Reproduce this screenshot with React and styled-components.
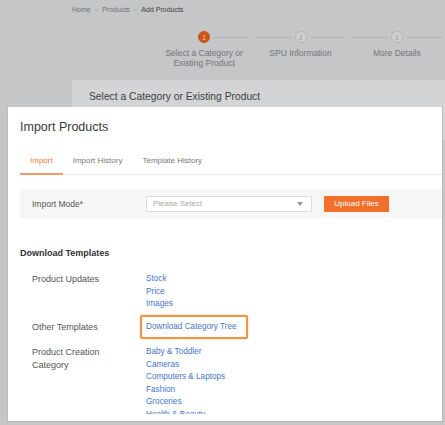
import styled, { createGlobalStyle } from "styled-components";

const GlobalStyle = createGlobalStyle`
  html, body {
    margin: 0;
    padding: 0;
    background: #c5c6c8;
    overflow: hidden;
    font-family: "Liberation Sans", Arial, sans-serif;
  }
  #root {
    height: 425px;
    position: relative;
  }
`;

const Page = styled.div`
  padding-left: 72px;
  height: 425px;
  box-sizing: border-box;
`;

const Breadcrumb = styled.div`
  display: flex;
  align-items: center;
  gap: 4px;
  padding-top: 5px;
  height: 10px;
  line-height: 10px;
  font-size: 7px;
  color: #6e6f72;
`;

const Crumb = styled.span`
  color: ${(p) => (p.$current ? "#3e3f42" : "#707174")};
`;

const Sep = styled.span`
  color: #a2a3a6;
  font-size: 6px;
`;

const Steps = styled.div`
  display: flex;
  margin-top: 16px;
  margin-left: 84px;
`;

const Step = styled.div`
  width: 103px;
  display: flex;
  flex-direction: column;
  align-items: center;
`;

const StepHead = styled.div`
  width: 100%;
  display: flex;
  align-items: center;
  height: 12px;
`;

const Line = styled.div`
  flex: 1;
  height: 1px;
  margin: 0 4px;
  background: ${(p) => (p.$hidden ? "transparent" : "#b1b2b5")};
`;

const Circle = styled.div`
  width: 12px;
  height: 12px;
  border-radius: 50%;
  box-sizing: border-box;
  display: flex;
  align-items: center;
  justify-content: center;
  font-size: 6.5px;
  background: ${(p) => (p.$active ? "#c9561c" : "#cfd0d2")};
  border: 1px solid ${(p) => (p.$active ? "#c9561c" : "#b3b4b7")};
  color: ${(p) => (p.$active ? "#f4d9c8" : "#9d9ea1")};
`;

const StepLabel = styled.div`
  margin-top: 5px;
  font-size: 8.5px;
  line-height: 10px;
  color: #737477;
  text-align: center;
`;

const Card = styled.div`
  margin-top: 12px;
  background: #d3d4d6;
  height: 60px;
  padding: 11px 0 0 17px;
  box-sizing: border-box;
  font-size: 10.3px;
  line-height: 12px;
  color: #3f4043;
`;

const Modal = styled.div`
  position: absolute;
  left: 7px;
  top: 107px;
  width: 436px;
  height: 315px;
  background: #fff;
  border: 1px solid #b9babd;
  border-top: none;
  box-sizing: border-box;
  display: flex;
  flex-direction: column;
  padding: 0 0 7px 12px;
  overflow: hidden;
`;

const Title = styled.div`
  padding-top: 12px;
  font-size: 12.5px;
  line-height: 16px;
  color: #3a3a3a;
`;

const TabBar = styled.div`
  display: flex;
  margin-top: 9px;
  border-bottom: 1px solid #ebebeb;
`;

const Tab = styled.div`
  padding: 12px 10px 7px;
  font-size: 8px;
  line-height: 10px;
  margin-bottom: -1px;
  color: ${(p) => (p.$active ? "#f07a3e" : "#7a7a7a")};
  border-bottom: 2px solid ${(p) => (p.$active ? "#f49a6a" : "transparent")};
`;

const Body = styled.div`
  flex: 1;
  min-height: 0;
  overflow: hidden;
`;

const ModeRow = styled.div`
  margin-top: 14px;
  height: 29px;
  background: #f6f6f6;
  display: flex;
  align-items: center;
  padding-left: 12px;
`;

const ModeLabel = styled.div`
  width: 114px;
  font-size: 8.5px;
  color: #555;
`;

const Select = styled.div`
  width: 166px;
  height: 16px;
  box-sizing: border-box;
  background: #fff;
  border: 1px solid #dadada;
  display: flex;
  align-items: center;
  justify-content: space-between;
  padding: 0 8px 0 6px;
  font-size: 8px;
  color: #aaa;
`;

const Caret = styled.span`
  width: 0;
  height: 0;
  border-left: 3px solid transparent;
  border-right: 3px solid transparent;
  border-top: 4px solid #999;
`;

const UploadButton = styled.div`
  margin-left: 12px;
  width: 65px;
  height: 16px;
  background: #f2702c;
  color: #fff;
  font-size: 8px;
  display: flex;
  align-items: center;
  justify-content: center;
`;

const SectionTitle = styled.div`
  margin-top: 29px;
  font-size: 9px;
  line-height: 12px;
  font-weight: bold;
  color: #333;
`;

const TemplateRow = styled.div`
  display: flex;
  align-items: ${(p) => (p.$center ? "center" : "flex-start")};
  margin-top: ${(p) => p.$mt}px;
  padding-left: 12px;
`;

const RowLabel = styled.div`
  width: 114px;
  flex-shrink: 0;
  font-size: 9px;
  line-height: 12.5px;
  color: #555;
`;

const Links = styled.div`
  display: flex;
  flex-direction: column;
`;

const LinkItem = styled.a`
  display: block;
  font-size: 8.2px;
  line-height: 12.5px;
  color: #4675c6;
  text-decoration: none;
`;

const Highlight = styled.div`
  margin-left: -6px;
  border: 2px solid #f3923f;
  border-radius: 2px;
  padding: 4px 9px 4px 4px;
  box-shadow: 0 0 2px rgba(243, 146, 63, 0.5);
`;

const steps = [
  { n: 1, label: ["Select a Category or", "Existing Product"], active: true },
  { n: 2, label: ["SPU Information"] },
  { n: 3, label: ["More Details"] },
];

const categories = [
  "Baby & Toddler",
  "Cameras",
  "Computers & Laptops",
  "Fashion",
  "Groceries",
  "Health & Beauty",
  "Home & Living",
];

export default function App() {
  return (
    <>
      <GlobalStyle />
      <Page>
        <Breadcrumb>
          <Crumb>Home</Crumb>
          <Sep>&gt;</Sep>
          <Crumb>Products</Crumb>
          <Sep>&gt;</Sep>
          <Crumb $current>Add Products</Crumb>
        </Breadcrumb>
        <Steps>
          {steps.map((s, i) => (
            <Step key={s.n}>
              <StepHead>
                <Line $hidden={i === 0} />
                <Circle $active={s.active}>{s.n}</Circle>
                <Line />
              </StepHead>
              <StepLabel>
                {s.label.map((l) => (
                  <div key={l}>{l}</div>
                ))}
              </StepLabel>
            </Step>
          ))}
        </Steps>
        <Card>Select a Category or Existing Product</Card>
      </Page>

      <Modal>
        <Title>Import Products</Title>
        <TabBar>
          <Tab $active>Import</Tab>
          <Tab>Import History</Tab>
          <Tab>Template History</Tab>
        </TabBar>
        <Body>
          <ModeRow>
            <ModeLabel>Import Mode*</ModeLabel>
            <Select>
              <span>Please Select</span>
              <Caret />
            </Select>
            <UploadButton>Upload Files</UploadButton>
          </ModeRow>

          <SectionTitle>Download Templates</SectionTitle>

          <TemplateRow $mt={14}>
            <RowLabel>Product Updates</RowLabel>
            <Links>
              <LinkItem href="#">Stock</LinkItem>
              <LinkItem href="#">Price</LinkItem>
              <LinkItem href="#">Images</LinkItem>
            </Links>
          </TemplateRow>

          <TemplateRow $mt={4} $center>
            <RowLabel>Other Templates</RowLabel>
            <Highlight>
              <LinkItem href="#">Download Category Tree</LinkItem>
            </Highlight>
          </TemplateRow>

          <TemplateRow $mt={7}>
            <RowLabel>
              Product Creation
              <br />
              Category
            </RowLabel>
            <Links>
              {categories.map((c) => (
                <LinkItem href="#" key={c}>
                  {c}
                </LinkItem>
              ))}
            </Links>
          </TemplateRow>
        </Body>
      </Modal>
    </>
  );
}
